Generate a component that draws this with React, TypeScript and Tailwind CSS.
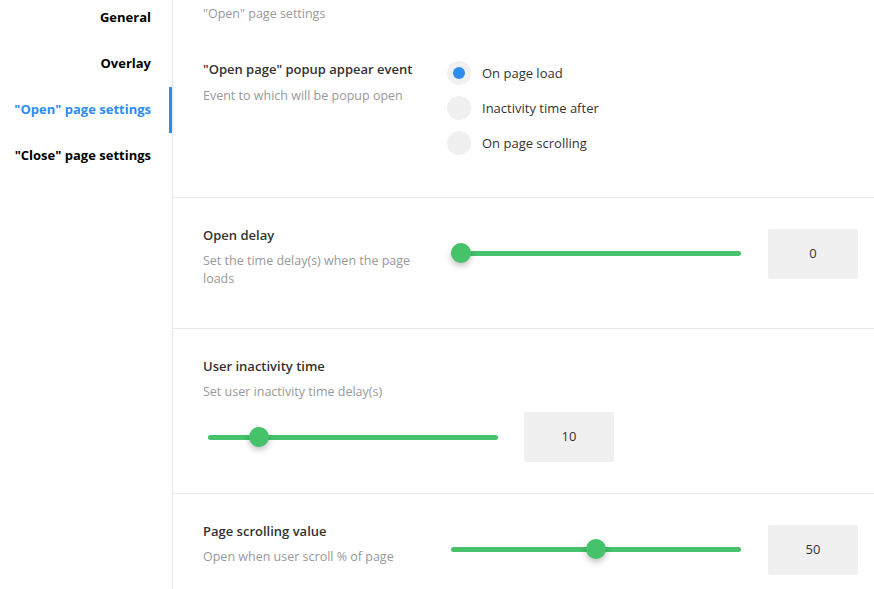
import React from "react";

const font = { fontFamily: '"Open Sans", "Noto Sans", sans-serif' };

function NavItem({ label, active }: { label: string; active?: boolean }) {
  return (
    <div
      className={
        "h-[46px] flex items-center justify-end pr-[18px] border-r-[3px] text-[13px] font-bold " +
        (active ? "border-[#2d8cf0] text-[#2d8cf0]" : "border-transparent text-black")
      }
    >
      {label}
    </div>
  );
}

function Slider({ value, max }: { value: number; max: number }) {
  const pct = value / max;
  return (
    <div className="relative w-[290px] h-[20px] flex items-center">
      <div className="w-full h-[5px] rounded-full bg-[#46c26a]" />
      <div
        className="absolute top-0 w-[20px] h-[20px] rounded-full bg-[#46c26a] shadow-[0_3px_6px_rgba(0,0,0,0.25)]"
        style={{ left: `${pct * 270}px` }}
      />
    </div>
  );
}

function NumBox({ value }: { value: string }) {
  return (
    <div className="w-[90px] h-[50px] rounded-[2px] bg-[#f0f0f0] flex items-center justify-center text-[13px] text-[#333]">
      {value}
    </div>
  );
}

function Radio({ label, checked }: { label: string; checked?: boolean }) {
  return (
    <div className="h-6 flex items-center gap-[11px]">
      <div className="w-6 h-6 rounded-full bg-[#f0f0f0] flex items-center justify-center">
        {checked && <div className="w-[12px] h-[12px] rounded-full bg-[#2d8cf0]" />}
      </div>
      <span className="text-[13px] leading-[18px] text-[#333]">{label}</span>
    </div>
  );
}

const title = "text-[13px] leading-[18px] font-[550] text-[#333]";
const desc = "text-[12.5px] leading-[18px] text-[#999]";

export default function App() {
  return (
    <div className="flex w-[874px] h-[589px] bg-white overflow-hidden" style={font}>
      <div className="w-[173px] shrink-0 border-r border-[#e8e8e8]">
        <div className="-mt-[5px]">
          <NavItem label="General" />
          <NavItem label="Overlay" />
          <NavItem label={'"Open" page settings'} active />
          <NavItem label={'"Close" page settings'} />
        </div>
      </div>
      <div className="flex-1 flex flex-col">
        <div className={"h-[28px] pl-[30px] pt-[5px] " + desc}>"Open" page settings</div>
        <div className="flex pl-[30px] pt-[32px] pb-[42px] border-b border-[#e8e8e8]">
          <div className="w-[244px]">
            <div className={title}>"Open page" popup appear event</div>
            <div className={"mt-[9px] " + desc}>Event to which will be popup open</div>
          </div>
          <div className="mt-[1px] flex flex-col gap-[11px]">
            <Radio label="On page load" checked />
            <Radio label="Inactivity time after" />
            <Radio label="On page scrolling" />
          </div>
        </div>
        <div className="flex pl-[30px] pt-[28px] pb-[40px] border-b border-[#e8e8e8]">
          <div className="w-[248px]">
            <div className={title}>Open delay</div>
            <div className={"mt-[8px] w-[215px] " + desc}>Set the time delay(s) when the page loads</div>
          </div>
          <div className="mt-[2px] h-[50px] flex items-center">
            <Slider value={0} max={100} />
          </div>
          <div className="ml-[27px] mt-[3px]">
            <NumBox value="0" />
          </div>
        </div>
        <div className="pl-[30px] pt-[28px] pb-[31px] border-b border-[#e8e8e8]">
          <div className={title}>User inactivity time</div>
          <div className={"mt-[8px] " + desc}>Set user inactivity time delay(s)</div>
          <div className="mt-[11px] flex items-center">
            <div className="ml-[5px]">
              <Slider value={10} max={66} />
            </div>
            <div className="ml-[26px]">
              <NumBox value="10" />
            </div>
          </div>
        </div>
        <div className="flex pl-[30px] pt-[28px]">
          <div className="w-[248px]">
            <div className={title}>Page scrolling value</div>
            <div className={"mt-[8px] " + desc}>Open when user scroll % of page</div>
          </div>
          <div className="mt-[2px] h-[50px] flex items-center">
            <Slider value={50} max={100} />
          </div>
          <div className="ml-[27px] mt-[3px]">
            <NumBox value="50" />
          </div>
        </div>
      </div>
    </div>
  );
}
